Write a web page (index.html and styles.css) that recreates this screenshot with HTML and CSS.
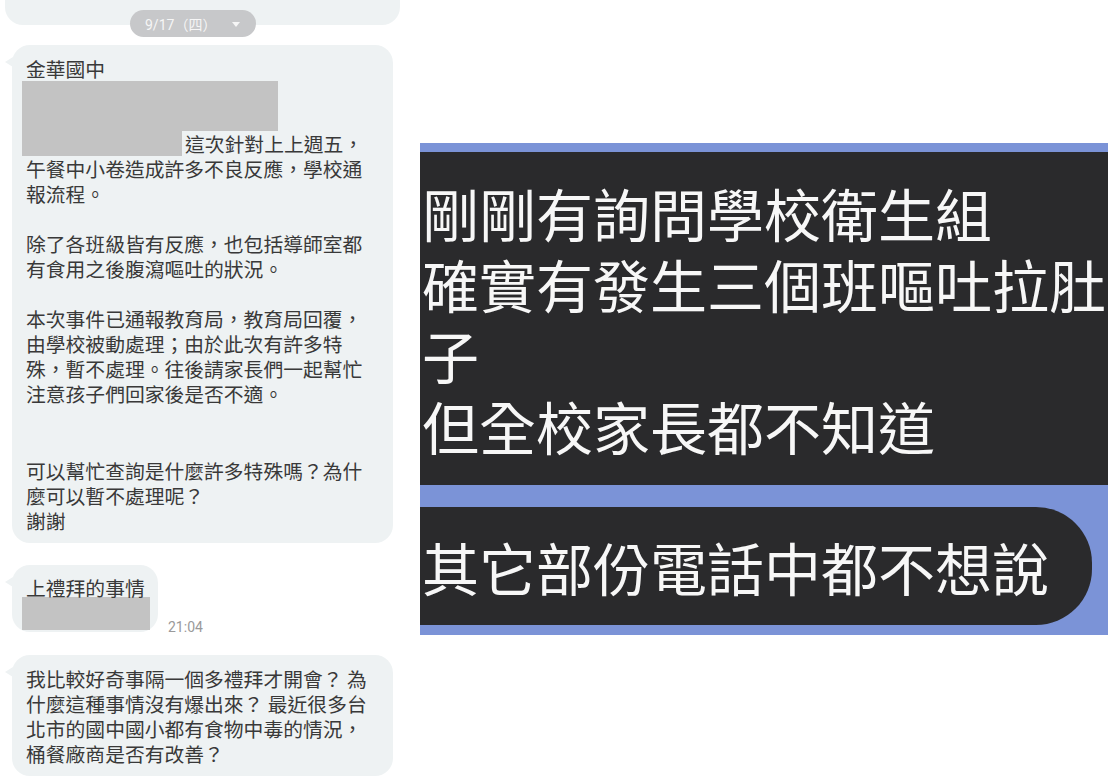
FILE: index.html
```html
<!DOCTYPE html>
<html lang="zh-Hant">
<head>
  <meta charset="UTF-8" />
  <meta name="viewport" content="width=device-width, initial-scale=1.0"/>
  <title>金華國中 午餐事件</title>
  <link rel="stylesheet" href="styles.css">
</head>
<body>
  <div class="page">
    <!-- left: chat screenshot -->
    <section class="chat">
      <div class="prev-bubble"></div>
      <div class="date-pill">9/17（四）<span class="caret"></span></div>

      <div class="bubble bubble-wide bubble-first">
        金華國中
        <div class="redact redact-top"></div>
        <span class="redact redact-inline"></span>這次針對上上週五，<br>
        午餐中小卷造成許多不良反應，學校通<br>
        報流程。<br>
        <br>
        除了各班級皆有反應，也包括導師室都<br>
        有食用之後腹瀉嘔吐的狀況。<br>
        <br>
        本次事件已通報教育局，教育局回覆，<br>
        由學校被動處理；由於此次有許多特<br>
        殊，暫不處理。往後請家長們一起幫忙<br>
        注意孩子們回家後是否不適。<br>
        <br>
        <br>
        <div class="late-para">
          可以幫忙查詢是什麼許多特殊嗎？為什<br>
          麼可以暫不處理呢？<br>
          謝謝
        </div>
      </div>

      <div class="msg-row">
        <div class="bubble bubble-short">
          上禮拜的事情
          <div class="redact redact-small"></div>
        </div>
        <span class="time">21:04</span>
      </div>

      <div class="bubble bubble-wide bubble-last">
        我比較好奇事隔一個多禮拜才開會？ 為<br>
        什麼這種事情沒有爆出來？ 最近很多台<br>
        北市的國中國小都有食物中毒的情況，<br>
        桶餐廠商是否有改善？
      </div>
    </section>

    <!-- right: cropped dark screenshot -->
    <section class="shot">
      <div class="shot-box">
        剛剛有詢問學校衛生組<br>
        確實有發生三個班嘔吐拉肚<br>
        子<br>
        但全校家長都不知道
      </div>
      <div class="shot-bubble">其它部份電話中都不想說</div>
    </section>
  </div>
</body>
</html>
```

FILE: styles.css
```css
:root {
  --bubble: #eef2f3;
  --chat-text: #393939;
  --dark: #2a2a2c;
  --blue: #7b93d7;
}
body {
  margin: 0;
  background-color: #fff;
  font-family: "Noto Sans CJK TC", sans-serif;
}
.page {
  display: flex;
  align-items: flex-start;
  gap: 20px;
  width: 1110px;
}

/* chat column */
.chat {
  width: 400px;
  flex: none;
}
.prev-bubble {
  height: 25px;
  margin-left: 5px;
  background-color: var(--bubble);
  border-radius: 0 0 18px 18px;
}
.date-pill {
  display: flex;
  align-items: center;
  width: 126px;
  height: 27px;
  box-sizing: border-box;
  margin: -15px 0 0 130px;
  padding-left: 15px;
  background-color: #c7c8ca;
  border-radius: 14px;
  color: #f6f6f6;
  font-family: Roboto, "Noto Sans CJK TC", sans-serif;
  font-size: 14px;
}
.caret {
  margin: 1px 16px 0 auto;
  border-left: 4px solid transparent;
  border-right: 4px solid transparent;
  border-top: 5px solid #f6f6f6;
}
.bubble {
  position: relative;
  margin-left: 12px;
  background-color: var(--bubble);
  border-radius: 18px;
  color: var(--chat-text);
  font-size: 19.8px;
  line-height: 25px;
  white-space: nowrap;
}
.bubble::before {
  content: "";
  position: absolute;
  left: -7px;
  top: 12px;
  border-top: 5px solid transparent;
  border-bottom: 5px solid transparent;
  border-right: 8px solid var(--bubble);
}
.bubble-wide {
  width: 381px;
  box-sizing: border-box;
  padding: 10.5px 14px;
}
.bubble-first {
  margin-top: 8px;
}
.bubble-last {
  margin-top: 23px;
}
.late-para {
  margin-top: 2px;
}
.redact {
  background-color: #c3c3c3;
}
.redact-top {
  width: 256px;
  height: 50px;
  margin-left: -4px;
}
.redact-inline {
  display: inline-block;
  vertical-align: top;
  width: 160px;
  height: 25px;
  margin: 0 3px 0 -4px;
}
.msg-row {
  display: flex;
  align-items: flex-end;
  gap: 10px;
  margin-top: 22px;
}
.bubble-short {
  padding: 10px 8px 2px 14px;
}
.redact-small {
  width: 128px;
  height: 33px;
  margin: -3px 0 0 -4px;
}
.time {
  margin-bottom: -4px;
  color: #9a9a9a;
  font-family: Roboto, sans-serif;
  font-size: 14px;
  line-height: 18px;
}

/* right screenshot */
.shot {
  width: 688px;
  flex: none;
  margin-top: 143px;
  padding: 9px 0 10px;
  background-color: var(--blue);
  overflow: hidden;
}
.shot-box,
.shot-bubble {
  background-color: var(--dark);
  color: #f7f7f7;
  font-size: 57px;
  white-space: nowrap;
}
.shot-box {
  padding: 25px 0 24px 2px;
  line-height: 71px;
}
.shot-bubble {
  display: flex;
  align-items: center;
  height: 118px;
  margin: 22px 16px 0 0;
  padding-left: 2px;
  border-radius: 0 56px 56px 0;
}
```
